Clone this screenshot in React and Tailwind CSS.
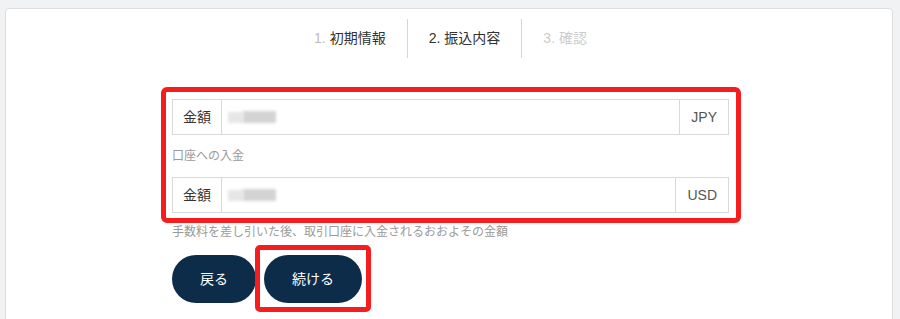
const FONT = { fontFamily: '"Liberation Sans", "Noto Sans CJK JP", sans-serif' };

const STEPS = [
    { num: '1.', label: '初期情報', numColor: 'text-[#bdbdbd]', color: 'text-[#333333]' },
    { num: '2.', label: '振込内容', numColor: 'text-[#333333]', color: 'text-[#333333]' },
    { num: '3.', label: '確認', numColor: 'text-[#cccccc]', color: 'text-[#cccccc]' },
];

function Blurred() {
    return (
        <div className="flex items-center ml-[6px]">
            <div className="w-[15px] h-[11px] bg-[#e6e6e6] blur-[1.5px]" />
            <div className="w-[33px] h-[12px] bg-[#d4d4d4] blur-[1.5px]" />
        </div>
    );
}

function AmountRow({ currency }) {
    return (
        <div className="flex h-[36px] border border-[#d9d9d9] bg-white">
            <div className="flex items-center px-[10px] border-r border-[#d9d9d9] text-[14px] text-[#333333]">
                金額
            </div>
            <div className="flex-1 flex items-center">
                <Blurred />
            </div>
            <div className="flex items-center px-[11px] border-l border-[#d9d9d9] text-[14px] text-[#555555]">
                {currency}
            </div>
        </div>
    );
}

export default function App() {
    return (
        <div className="h-[319px] bg-[#f1f2f4] pt-[8px] pl-[5px] pr-[7px] overflow-hidden" style={FONT}>
            <div className="bg-white border border-[#dedede] rounded-[4px] h-[330px]">
                <div className="flex justify-center pt-[10px] pl-[3px]">
                    {STEPS.map((s, i) => (
                        <div
                            key={s.num}
                            className={`h-[39px] flex items-center px-[21px] text-[14px] ${i > 0 ? 'border-l border-[#d6d6d6]' : ''}`}
                        >
                            <span className={s.numColor}>{s.num}</span>
                            <span className={`ml-[4px] ${s.color}`}>{s.label}</span>
                        </div>
                    ))}
                </div>

                <div className="w-[557px] ml-[166px] mt-[41px]">
                    <div className="relative">
                        <AmountRow currency="JPY" />
                        <div className="h-[42px] flex items-center text-[12px] text-[#9a9a9a]">口座への入金</div>
                        <AmountRow currency="USD" />
                        <div className="absolute -left-[11px] -right-[12px] -top-[12px] -bottom-[10px] border-[5px] border-[#f51d1d] rounded-[6px] pointer-events-none" />
                    </div>

                    <p className="mt-[11px] text-[12px] leading-[16px] text-[#9a9a9a]">
                        手数料を差し引いた後、取引口座に入金されるおおよその金額
                    </p>

                    <div className="flex gap-[8px] mt-[15px]">
                        <button className="h-[48px] w-[84px] rounded-full bg-[#0d2c49] text-white text-[14px]">戻る</button>
                        <div className="relative">
                            <button className="h-[48px] w-[98px] rounded-full bg-[#0d2c49] text-white text-[14px]">続ける</button>
                            <div className="absolute -left-[9px] -right-[9px] -top-[10px] -bottom-[9px] border-[5px] border-[#f51d1d] rounded-[5px] pointer-events-none" />
                        </div>
                    </div>
                </div>
            </div>
        </div>
    );
}
